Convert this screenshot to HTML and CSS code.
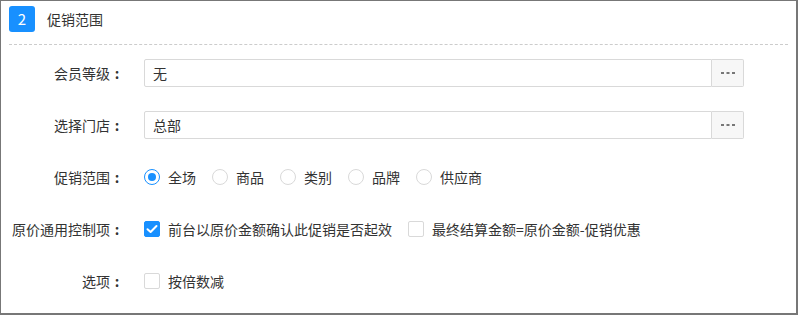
FILE: index.html
```html
<!DOCTYPE html>
<html lang="zh-CN">
<head>
    <meta charset="UTF-8">
    <title>促销范围</title>
    <link rel="stylesheet" href="styles.css">
</head>
<body>
    <div class="panel">
        <div class="panel-head">
            <span class="step">2</span>
            <span class="panel-title">促销范围</span>
        </div>
        <div class="form">
            <div class="row">
                <label class="row-label">会员等级</label>
                <div class="picker">
                    <div class="picker-text">无</div>
                    <div class="picker-btn"><svg width="14" height="4" viewBox="0 0 14 4"><rect x="0" y="1" width="3" height="2" fill="#777"/><rect x="5.5" y="1" width="3" height="2" fill="#777"/><rect x="11" y="1" width="3" height="2" fill="#777"/></svg></div>
                </div>
            </div>
            <div class="row">
                <label class="row-label">选择门店</label>
                <div class="picker">
                    <div class="picker-text">总部</div>
                    <div class="picker-btn"><svg width="14" height="4" viewBox="0 0 14 4"><rect x="0" y="1" width="3" height="2" fill="#777"/><rect x="5.5" y="1" width="3" height="2" fill="#777"/><rect x="11" y="1" width="3" height="2" fill="#777"/></svg></div>
                </div>
            </div>
            <div class="row">
                <label class="row-label">促销范围</label>
                <div class="choices">
                    <span class="choice"><span class="radio on"></span>全场</span>
                    <span class="choice"><span class="radio"></span>商品</span>
                    <span class="choice"><span class="radio"></span>类别</span>
                    <span class="choice"><span class="radio"></span>品牌</span>
                    <span class="choice"><span class="radio"></span>供应商</span>
                </div>
            </div>
            <div class="row">
                <label class="row-label">原价通用控制项</label>
                <div class="choices">
                    <span class="choice"><span class="check on"><svg width="12" height="10" viewBox="0 0 12 10"><path d="M1.5 5.2 L4.6 8 L10.5 2" fill="none" stroke="#fff" stroke-width="2" stroke-linecap="round" stroke-linejoin="round"/></svg></span>前台以原价金额确认此促销是否起效</span>
                    <span class="choice"><span class="check"></span>最终结算金额=原价金额-促销优惠</span>
                </div>
            </div>
            <div class="row">
                <label class="row-label">选项</label>
                <div class="choices">
                    <span class="choice"><span class="check"></span>按倍数减</span>
                </div>
            </div>
        </div>
    </div>
</body>
</html>
```

FILE: styles.css
```css
body {
    margin: 0;
    font-family: "Noto Sans CJK SC", "Noto Sans", sans-serif;
    font-size: 14px;
    color: #333;
    background-color: #fff;
}
.panel {
    width: 795px;
    height: 312px;
    border: 1px solid #777;
    border-right-width: 2px;
    border-bottom-width: 2px;
    background-color: #fff;
}
.panel-head {
    display: flex;
    align-items: center;
    margin: 0 8px;
    padding: 5px 0 12px 0;
    border-bottom: 1px dashed #ccc;
}
.step {
    width: 26px;
    height: 26px;
    border-radius: 3px;
    background-color: #1890ff;
    color: white;
    font-size: 15px;
    line-height: 26px;
    text-align: center;
}
.panel-title {
    margin-left: 12px;
    line-height: 26px;
}
.form {
    padding-top: 14px;
}
.row {
    display: flex;
    align-items: center;
    height: 28px;
    margin-bottom: 24px;
}
.row-label {
    width: 123px;
    text-align: right;
    margin-right: 20px;
    white-space: nowrap;
}
.row-label::after {
    content: ":";
    display: inline-block;
    width: 14px;
    text-align: center;
    font-weight: bold;
}
.picker {
    display: flex;
    width: 600px;
    height: 28px;
}
.picker-text {
    flex: 1;
    border: 1px solid #d9d9d9;
    border-radius: 2px 0 0 2px;
    padding: 0 8px;
    line-height: 26px;
}
.picker-btn {
    width: 31px;
    border: 1px solid #d9d9d9;
    border-left: none;
    border-radius: 0 2px 2px 0;
    background-color: #f7f7f7;
    display: flex;
    align-items: center;
    justify-content: center;
}
.choices {
    display: flex;
    align-items: center;
}
.choice {
    display: flex;
    align-items: center;
    margin-right: 16px;
    white-space: nowrap;
}
.radio {
    box-sizing: border-box;
    width: 16px;
    height: 16px;
    margin-right: 8px;
    border: 1px solid #d9d9d9;
    border-radius: 50%;
    background-color: #fff;
    display: flex;
    align-items: center;
    justify-content: center;
}
.radio.on {
    border-color: #1890ff;
}
.radio.on::after {
    content: "";
    width: 8px;
    height: 8px;
    border-radius: 50%;
    background-color: #1890ff;
}
.check {
    box-sizing: border-box;
    width: 16px;
    height: 16px;
    margin-right: 8px;
    border: 1px solid #d9d9d9;
    border-radius: 2px;
    background-color: #fff;
    display: flex;
    align-items: center;
    justify-content: center;
}
.check.on {
    border-color: #1890ff;
    background-color: #1890ff;
}
```
